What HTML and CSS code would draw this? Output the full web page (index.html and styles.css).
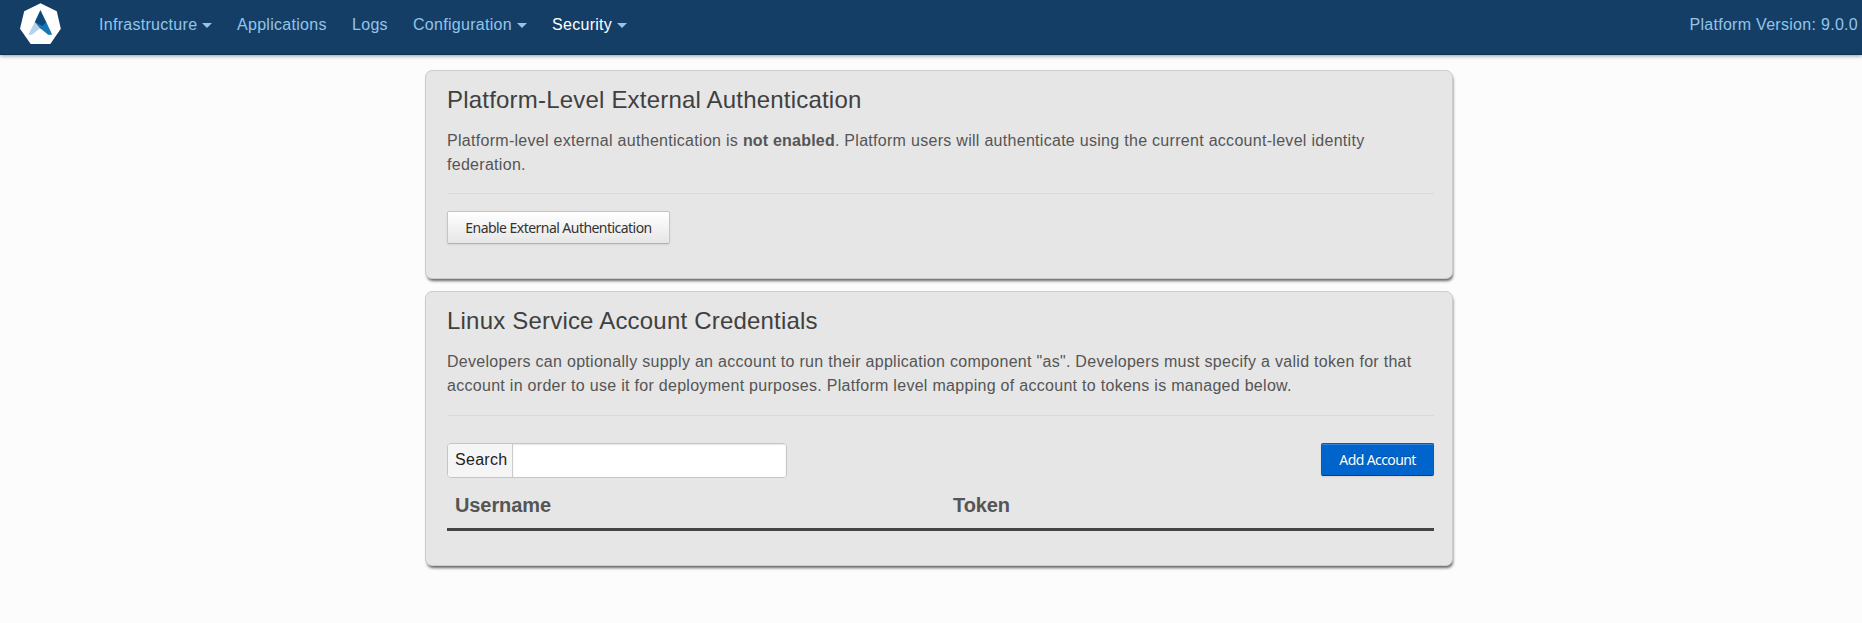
FILE: index.html
```html
<!DOCTYPE html>
<html lang="en">
<head>
<meta charset="utf-8">
<title>Platform Security</title>
<link rel="stylesheet" href="styles.css">
</head>
<body>
<header class="navbar">
  <svg class="logo" width="42" height="42" viewBox="0 0 42 42">
    <path fill="#fff" d="M20.5 0.3 36.8 8.3 40.8 25.7 30.3 41H10.7L0 25.7 4.2 8.3Z"/>
    <path fill="#b4d3e9" d="M14.8 19 20.2 25.3 12 31.7H8.2Z"/>
    <path fill="#1577b8" d="M26 18.5 32.2 31.7H28.2L20.2 25.3 18 22Z"/>
    <path fill="#2272ab" d="M14.8 19 20.4 17 26.2 19 20.3 25.4Z"/>
    <path fill="#0c4a7c" d="M20.4 7 26.2 19 22.5 23 14.8 19Z"/>
  </svg>
  <nav class="menu">
    <a class="item item-infra">Infrastructure<i class="caret"></i></a>
    <a class="item item-apps">Applications</a>
    <a class="item item-logs">Logs</a>
    <a class="item item-config">Configuration<i class="caret"></i></a>
    <a class="item active">Security<i class="caret"></i></a>
  </nav>
  <span class="version">Platform Version: 9.0.0</span>
</header>
<main class="content">
  <section class="panel panel-auth">
    <h3 class="title">Platform-Level External Authentication</h3>
    <p class="text">Platform-level external authentication is <strong>not enabled</strong>. Platform users will authenticate using the current account-level identity federation.</p>
    <hr class="rule">
    <button class="btn btn-enable">Enable External Authentication</button>
  </section>
  <section class="panel panel-creds">
    <h3 class="title">Linux Service Account Credentials</h3>
    <p class="text">Developers can optionally supply an account to run their application component "as". Developers must specify a valid token for that account in order to use it for deployment purposes. Platform level mapping of account to tokens is managed below.</p>
    <hr class="rule rule-creds">
    <div class="toolbar">
      <div class="search"><label class="addon" for="q">Search</label><input class="field" id="q" type="text"></div>
      <button class="btn btn-primary">Add Account</button>
    </div>
    <div class="thead"><span class="th">Username</span><span class="th">Token</span></div>
  </section>
</main>
</body>
</html>
```
FILE: styles.css
```css
* { box-sizing: border-box; }
body {
  margin: 0;
  min-height: 623px;
  background: #fcfcfc;
  color: #555;
  font: 16px/24px "Liberation Sans", Arial, sans-serif;
  letter-spacing: .29px;
}
.navbar {
  display: flex;
  align-items: flex-start;
  height: 55px;
  padding: 3px 4px 0 20px;
  background: #153e67;
  border-bottom: 1px solid #0f3259;
  box-shadow: 0 1px 4px rgba(0, 0, 0, .4);
  color: #92c5e8;
}
.logo { flex: none; }
.menu { display: flex; margin: 10px 0 0 37px; }
.item { display: flex; white-space: nowrap; }
.item-infra { width: 138px; }
.item-apps { width: 115px; }
.item-logs { width: 61px; }
.item-config { width: 139px; }
.active { color: #fff; }
.caret {
  width: 10px;
  height: 5px;
  margin: 10px 0 0 5px;
  border: 5px solid transparent;
  border-top-color: #92c5e8;
  border-bottom: 0;
}
.version { margin: 10px 0 0 auto; white-space: nowrap; }
.content { width: 1028px; margin: 15px 0 0 425px; }
.panel {
  padding: 14px 18px 0 21px;
  background: #e6e6e6;
  border: 1px solid #ccc;
  border-radius: 7px;
  box-shadow: 1px 3px 3px -1px rgba(0, 0, 0, .6);
}
.panel-auth { height: 209px; margin-bottom: 12px; }
.panel-creds { height: 275px; }
.title { margin: 0; font-size: 24px; line-height: 30px; font-weight: 400; letter-spacing: .2px; color: #404040; }
.text { margin: 14px 0 0; }
.text strong { letter-spacing: .2px; }
.rule { height: 1px; margin: 16px 0 0; border: 0; background: #dadada; }
.rule-creds { margin-top: 17px; }
.btn {
  display: block;
  height: 33px;
  padding: 0;
  border: 1px solid #bbb;
  border-radius: 2px;
  font: 14px/20px "Noto Sans", sans-serif;
  white-space: nowrap;
}
.btn-enable {
  width: 223px;
  margin-top: 17px;
  background: linear-gradient(#fff, #e6e6e6);
  border-color: #c5c5c5 #c5c5c5 #b0b0b0;
  box-shadow: 0 1px 2px rgba(0, 0, 0, .08);
  color: #333;
  letter-spacing: -.54px;
}
.btn-primary {
  width: 113px;
  background: #0064cd;
  border-color: #005fc3 #005fc3 #003f81;
  box-shadow: inset 0 1px 0 rgba(255, 255, 255, .2), 0 1px 2px rgba(0, 0, 0, .08);
  text-shadow: 0 -1px 0 rgba(0, 0, 0, .25);
  color: #fff;
  letter-spacing: -.6px;
}
.toolbar { display: flex; justify-content: space-between; margin-top: 27px; height: 35px; }
.search {
  display: flex;
  width: 340px;
  border: 1px solid #c5c5c5;
  border-radius: 4px;
  background: #fff;
  overflow: hidden;
}
.addon { width: 65px; padding: 4px 0 0 7px; background: #f5f5f5; border-right: 1px solid #ccc; color: #222; }
.field { flex: 1; min-width: 0; border: 0; background: #fff; box-shadow: inset 0 1px 2px rgba(0, 0, 0, .1); }
.thead {
  display: grid;
  grid-template-columns: 498px 1fr;
  height: 53px;
  padding: 15px 0 0 8px;
  border-bottom: 3px solid #444;
}
.th { font-size: 20px; line-height: 24px; font-weight: 700; letter-spacing: -.1px; }
```
